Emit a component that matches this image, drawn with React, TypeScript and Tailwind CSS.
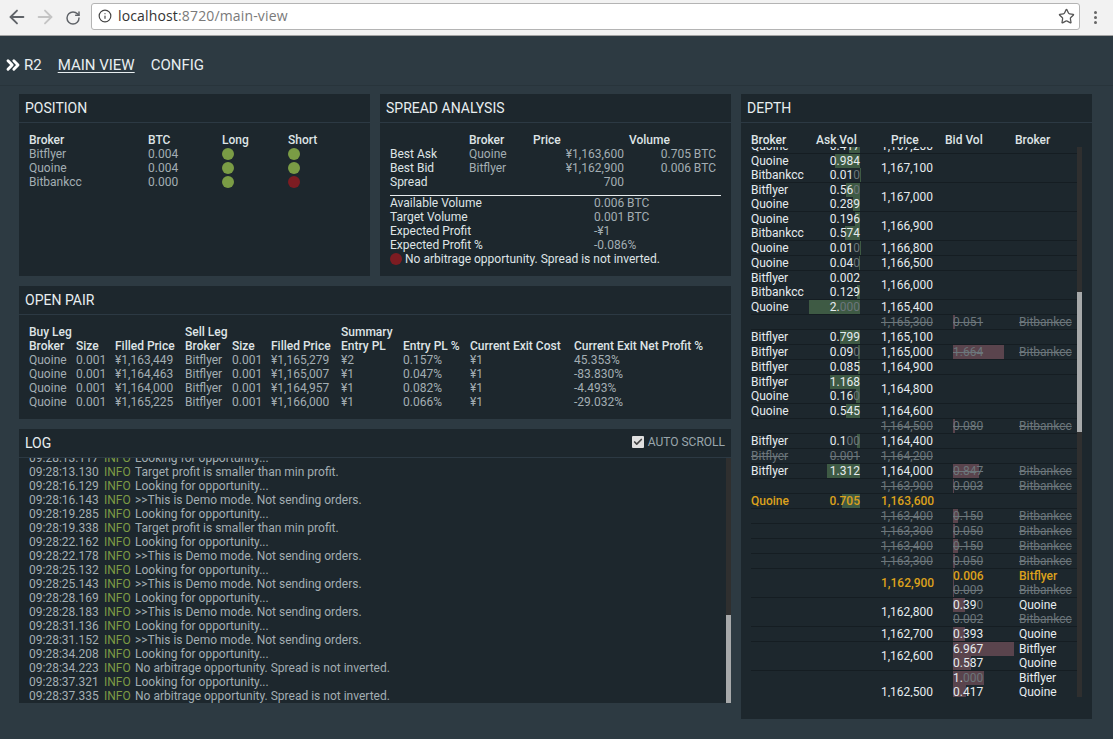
import React from 'react';
import { ArrowLeft, ArrowRight, RotateCw, Info, Star, ChevronsRight, Check } from 'lucide-react';

type Level = { broker: string; vol: string; stale?: boolean; best?: boolean };
type DepthRow = { price: string; asks?: Level[]; bids?: Level[]; stale?: boolean; best?: boolean };

const q = (vol: string, best?: boolean): Level => ({ broker: 'Quoine', vol, best });
const f = (vol: string, best?: boolean): Level => ({ broker: 'Bitflyer', vol, best });
const b = (vol: string): Level => ({ broker: 'Bitbankcc', vol });
const sb = (vol: string): Level => ({ broker: 'Bitbankcc', vol, stale: true });

const depthRows: DepthRow[] = [
    { price: '1,167,200', asks: [q('0.417')] },
    { price: '1,167,100', asks: [q('0.984'), b('0.010')] },
    { price: '1,167,000', asks: [f('0.560'), q('0.289')] },
    { price: '1,166,900', asks: [q('0.196'), b('0.574')] },
    { price: '1,166,800', asks: [q('0.010')] },
    { price: '1,166,500', asks: [q('0.040')] },
    { price: '1,166,000', asks: [f('0.002'), b('0.129')] },
    { price: '1,165,400', asks: [q('2.000')] },
    { price: '1,165,300', stale: true, bids: [sb('0.051')] },
    { price: '1,165,100', asks: [f('0.799')] },
    { price: '1,165,000', asks: [f('0.090')], bids: [sb('1.664')] },
    { price: '1,164,900', asks: [f('0.085')] },
    { price: '1,164,800', asks: [f('1.168'), q('0.160')] },
    { price: '1,164,600', asks: [q('0.545')] },
    { price: '1,164,500', stale: true, bids: [sb('0.080')] },
    { price: '1,164,400', asks: [f('0.100')] },
    { price: '1,164,200', stale: true, asks: [{ broker: 'Bitflyer', vol: '0.001', stale: true }] },
    { price: '1,164,000', asks: [f('1.312')], bids: [sb('0.847')] },
    { price: '1,163,900', stale: true, bids: [sb('0.003')] },
    { price: '1,163,600', best: true, asks: [q('0.705', true)] },
    { price: '1,163,400', stale: true, bids: [sb('0.150')] },
    { price: '1,163,300', stale: true, bids: [sb('0.050')] },
    { price: '1,163,400', stale: true, bids: [sb('0.150')] },
    { price: '1,163,300', stale: true, bids: [sb('0.050')] },
    { price: '1,162,900', best: true, bids: [f('0.006', true), sb('0.009')] },
    { price: '1,162,800', bids: [q('0.390'), sb('0.002')] },
    { price: '1,162,700', bids: [q('0.393')] },
    { price: '1,162,600', bids: [f('6.967'), q('0.587')] },
    // third level runs past the bottom of the list
    { price: '1,162,500', bids: [f('1.000'), q('0.417'), q('0.100')] },
];

const logLines = [
    ['09:28:13.117', 'Looking for opportunity...'],
    ['09:28:13.130', 'Target profit is smaller than min profit.'],
    ['09:28:16.129', 'Looking for opportunity...'],
    ['09:28:16.143', '>>This is Demo mode. Not sending orders.'],
    ['09:28:19.285', 'Looking for opportunity...'],
    ['09:28:19.338', 'Target profit is smaller than min profit.'],
    ['09:28:22.162', 'Looking for opportunity...'],
    ['09:28:22.178', '>>This is Demo mode. Not sending orders.'],
    ['09:28:25.132', 'Looking for opportunity...'],
    ['09:28:25.143', '>>This is Demo mode. Not sending orders.'],
    ['09:28:28.169', 'Looking for opportunity...'],
    ['09:28:28.183', '>>This is Demo mode. Not sending orders.'],
    ['09:28:31.136', 'Looking for opportunity...'],
    ['09:28:31.152', '>>This is Demo mode. Not sending orders.'],
    ['09:28:34.208', 'Looking for opportunity...'],
    ['09:28:34.223', 'No arbitrage opportunity. Spread is not inverted.'],
    ['09:28:37.321', 'Looking for opportunity...'],
    ['09:28:37.335', 'No arbitrage opportunity. Spread is not inverted.'],
];

const openPairs = [
    ['¥1,163,449', '¥1,165,279', '¥2', '0.157%', '45.353%'],
    ['¥1,164,463', '¥1,165,007', '¥1', '0.047%', '-83.830%'],
    ['¥1,164,000', '¥1,164,957', '¥1', '0.082%', '-4.493%'],
    ['¥1,165,225', '¥1,166,000', '¥1', '0.066%', '-29.032%'],
];

const Dot = ({ ok }: { ok: boolean }) => (
    <span className={`block w-3 h-3 rounded-full ${ok ? 'bg-[#7a9c45]' : 'bg-[#7d1c22]'}`} />
);

function Panel({ title, right, className, children }: { title: string; right?: React.ReactNode; className?: string; children: React.ReactNode }) {
    return (
        <section className={`bg-[#1d272d] flex flex-col ${className ?? ''}`}>
            <div className="h-[29px] shrink-0 border-b border-[#2c3943] pl-[6px] pr-[6px] flex items-center justify-between">
                <h2 className="text-sm text-[#e8eef0] font-normal leading-none">{title}</h2>
                {right}
            </div>
            {children}
        </section>
    );
}

function Scrollbar({ thumbTop, thumbHeight }: { thumbTop: string; thumbHeight: string }) {
    return (
        <div className="w-[5px] shrink-0 bg-[#2f2f2f]">
            <div className={`bg-[#a7a9aa] ${thumbTop} ${thumbHeight}`} />
        </div>
    );
}

// trailing zeros of a volume are drawn dim
function Vol({ value }: { value: string }) {
    const main = value.replace(/0+$/, '');
    return (
        <>
            {main}
            <span className="text-[#6c767b]">{value.slice(main.length)}</span>
        </>
    );
}

function toneOf(stale?: boolean, best?: boolean) {
    if (stale) return 'text-[#6c767b] line-through';
    if (best) return 'text-[#dca11c] font-medium';
    return 'text-[#e6ecef]';
}

function VolCell({ level, side }: { level: Level; side: 'ask' | 'bid' }) {
    const full = side === 'ask' ? 51 : 61;
    const width = Math.min(parseFloat(level.vol) / 2, 1) * full;
    return (
        <div className={`relative h-[14px] ${side === 'ask' ? 'text-right' : 'text-left'}`}>
            <div
                className={`absolute top-0 h-[14px] ${side === 'ask' ? 'right-0 bg-[#3e5a44]' : 'left-0 bg-[#5a444d]'}`}
                style={{ width }}
            />
            <span className={`relative ${toneOf(level.stale, level.best)}`}>
                {level.stale || level.best ? level.vol : <Vol value={level.vol} />}
            </span>
        </div>
    );
}

function DepthLine({ row }: { row: DepthRow }) {
    return (
        <div className="flex items-center border-b border-[#151d22]">
            <div className="w-[58px] shrink-0">
                {row.asks?.map((l, i) => (
                    <div key={i} className={`h-[14px] ${toneOf(l.stale, l.best)}`}>{l.broker}</div>
                ))}
            </div>
            <div className="w-[51px] shrink-0">
                {row.asks?.map((l, i) => <VolCell key={i} level={l} side="ask" />)}
            </div>
            <div className={`ml-[21px] w-[51px] shrink-0 text-right ${toneOf(row.stale, row.best)}`}>{row.price}</div>
            <div className="ml-[21px] w-[61px] shrink-0 py-0">
                {row.bids?.map((l, i) => <VolCell key={i} level={l} side="bid" />)}
                {!row.bids && <div className="h-[14px]" />}
            </div>
            <div className="ml-[5px] flex-1">
                {row.bids?.map((l, i) => (
                    <div key={i} className={`h-[14px] ${toneOf(l.stale, l.best)}`}>{l.broker}</div>
                ))}
            </div>
        </div>
    );
}

function BrowserBar() {
    return (
        <div className="h-[36px] bg-[#f2f2f2] border-b border-[#a3a3a3] flex items-center text-[#5f6368]">
            <ArrowLeft size={22} strokeWidth={2} className="ml-[6px] mb-[1px]" />
            <ArrowRight size={22} strokeWidth={2} className="ml-[6px] mb-[1px] text-[#c4c4c4]" />
            <RotateCw size={16} strokeWidth={2.2} className="ml-[9px]" />
            <div className="ml-[10px] h-[27px] w-[989px] mb-[3px] bg-white border border-[#b4b4b4] rounded-[3px] flex items-center">
                <Info size={14} strokeWidth={2} className="ml-[6px] text-[#444]" />
                <span className="ml-[6px] text-[14px] tracking-[0.15px] text-[#333] font-['Open_Sans',sans-serif] leading-none">
                    localhost<span className="text-[#7a7a7a]">:8720/main-view</span>
                </span>
                <Star size={17} strokeWidth={1.8} className="ml-auto mr-[4px] text-[#555]" />
            </div>
            <div className="ml-[14px] flex flex-col gap-[2px]">
                <span className="w-[3px] h-[3px] rounded-full bg-[#666]" />
                <span className="w-[3px] h-[3px] rounded-full bg-[#666]" />
                <span className="w-[3px] h-[3px] rounded-full bg-[#666]" />
            </div>
        </div>
    );
}

export default function App() {
    return (
        <div className="h-[739px] w-[1113px] overflow-hidden bg-[#2d3a42] font-[Roboto,sans-serif] text-xs leading-[14px] text-[#a3aeb3]">
            <BrowserBar />

            <nav className="h-[50px] pt-[8px] border-b border-[#28343b] flex items-center text-[15px] text-[#e8eef0]">
                <ChevronsRight size={20} strokeWidth={3.5} className="ml-[3px] text-white" />
                <span className="ml-[1px]">R2</span>
                <a className="ml-[16px] underline underline-offset-2">MAIN VIEW</a>
                <a className="ml-[16px]">CONFIG</a>
            </nav>

            <main className="flex pl-[19px] pt-[8px] gap-[10px]">
                <div className="w-[712px] flex flex-col gap-[10px]">
                    <div className="flex gap-[10px]">
                        <Panel title="POSITION" className="w-[351px] h-[182px]">
                            <div className="pl-[10px] pt-[10px]">
                                <div className="grid grid-cols-[119px_74px_66px_1fr]">
                                    <b className="font-medium text-[#dfe4e6]">Broker</b>
                                    <b className="font-medium text-[#dfe4e6]">BTC</b>
                                    <b className="font-medium text-[#dfe4e6]">Long</b>
                                    <b className="font-medium text-[#dfe4e6]">Short</b>
                                    {[['Bitflyer', '0.004', true, true], ['Quoine', '0.004', true, true], ['Bitbankcc', '0.000', true, false]].map((r, i) => (
                                        <React.Fragment key={i}>
                                            <span>{r[0]}</span>
                                            <span>{r[1]}</span>
                                            <span className="flex items-center"><Dot ok={!!r[2]} /></span>
                                            <span className="flex items-center"><Dot ok={!!r[3]} /></span>
                                        </React.Fragment>
                                    ))}
                                </div>
                            </div>
                        </Panel>

                        <Panel title="SPREAD ANALYSIS" className="w-[351px] h-[182px]">
                            <div className="pl-[10px] pr-[10px] pt-[10px]">
                                <div className="grid grid-cols-[79px_64px_91px_92px] pr-[5px]">
                                    <span />
                                    <b className="font-medium text-[#dfe4e6]">Broker</b>
                                    <b className="font-medium text-[#dfe4e6]">Price</b>
                                    <b className="font-medium text-[#dfe4e6] pl-[5px]">Volume</b>
                                    <span className="text-[#dfe4e6]">Best Ask</span>
                                    <span>Quoine</span>
                                    <span className="text-right -ml-[20px]">¥1,163,600</span>
                                    <span className="text-right">0.705 BTC</span>
                                    <span className="text-[#dfe4e6]">Best Bid</span>
                                    <span>Bitflyer</span>
                                    <span className="text-right -ml-[20px]">¥1,162,900</span>
                                    <span className="text-right">0.006 BTC</span>
                                    <span className="text-[#dfe4e6]">Spread</span>
                                    <span />
                                    <span className="text-right">700</span>
                                    <span />
                                </div>
                                <div className="mt-[6px] h-px bg-[#e8ecee]" />
                                <div className="grid grid-cols-[204px_1fr]">
                                    <span className="text-[#dfe4e6]">Available Volume</span>
                                    <span>0.006 BTC</span>
                                    <span className="text-[#dfe4e6]">Target Volume</span>
                                    <span>0.001 BTC</span>
                                    <span className="text-[#dfe4e6]">Expected Profit</span>
                                    <span>-¥1</span>
                                    <span className="text-[#dfe4e6]">Expected Profit %</span>
                                    <span>-0.086%</span>
                                </div>
                                <div className="flex items-center gap-[3px] text-[#dfe4e6]">
                                    <Dot ok={false} />
                                    No arbitrage opportunity. Spread is not inverted.
                                </div>
                            </div>
                        </Panel>
                    </div>

                    <Panel title="OPEN PAIR" className="h-[133px]">
                        <div className="pl-[10px] pt-[10px]">
                            <div className="grid grid-cols-[47px_39px_70px_47px_39px_70px_62px_67px_104px_1fr] font-medium text-[#dfe4e6]">
                                <span>Buy Leg</span><span /><span />
                                <span>Sell Leg</span><span /><span />
                                <span>Summary</span><span /><span /><span />
                                <span>Broker</span><span>Size</span><span>Filled Price</span>
                                <span>Broker</span><span>Size</span><span>Filled Price</span>
                                <span>Entry PL</span><span>Entry PL %</span><span>Current Exit Cost</span><span>Current Exit Net Profit %</span>
                            </div>
                            {openPairs.map((p, i) => (
                                <div key={i} className="grid grid-cols-[47px_39px_70px_47px_39px_70px_62px_67px_104px_1fr]">
                                    <span>Quoine</span><span>0.001</span><span>{p[0]}</span>
                                    <span>Bitflyer</span><span>0.001</span><span>{p[1]}</span>
                                    <span>{p[2]}</span><span>{p[3]}</span><span>¥1</span><span>{p[4]}</span>
                                </div>
                            ))}
                        </div>
                    </Panel>

                    <Panel
                        title="LOG"
                        className="h-[274px]"
                        right={
                            <label className="flex items-center gap-[4px] mb-[2px] text-[#9aa6ac]">
                                <span className="w-3 h-3 rounded-[1px] bg-[#e0e0e0] flex items-center justify-center">
                                    <Check size={10} strokeWidth={4} className="text-[#444]" />
                                </span>
                                AUTO SCROLL
                            </label>
                        }
                    >
                        <div className="flex-1 flex min-h-0">
                            <div className="flex-1 overflow-hidden pl-[10px]">
                                <div className="-mt-[7px]">
                                    {logLines.map(([time, msg], i) => (
                                        <div key={i} className="flex h-[14px] whitespace-nowrap">
                                            <span className="w-[75px] shrink-0">{time}</span>
                                            <span className="w-[31px] shrink-0 text-[#7d9c45]">INFO</span>
                                            <span>{msg}</span>
                                        </div>
                                    ))}
                                </div>
                            </div>
                            <Scrollbar thumbTop="mt-[157px]" thumbHeight="h-[88px]" />
                        </div>
                    </Panel>
                </div>

                <Panel title="DEPTH" className="w-[351px] h-[625px]">
                    <div className="pl-[10px] pt-[10px]">
                        <div className="flex h-[14px] font-medium text-[#dfe4e6]">
                            <span className="w-[65px]">Broker</span>
                            <span className="w-[75px]">Ask Vol</span>
                            <span className="w-[54px]">Price</span>
                            <span className="w-[70px]">Bid Vol</span>
                            <span>Broker</span>
                        </div>
                        <div className="flex h-[550px]">
                            <div className="w-[326px] overflow-hidden">
                                <div className="-mt-[8px]">
                                    {depthRows.map((row, i) => <DepthLine key={i} row={row} />)}
                                </div>
                            </div>
                            <Scrollbar thumbTop="mt-[145px]" thumbHeight="h-[140px]" />
                        </div>
                    </div>
                </Panel>
            </main>
        </div>
    );
}
